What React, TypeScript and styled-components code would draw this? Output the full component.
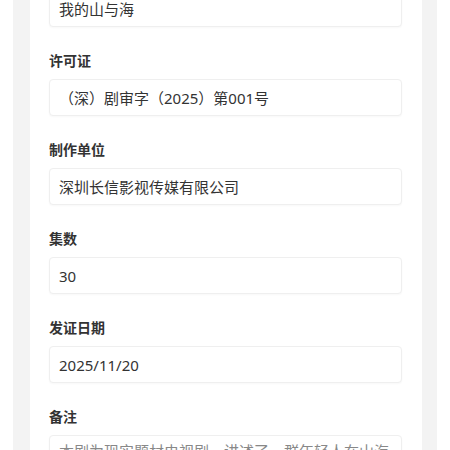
import styled, { createGlobalStyle } from "styled-components";

const GlobalStyle = createGlobalStyle`
  html, body {
    margin: 0;
    padding: 0;
    background: #ffffff;
  }
  body {
    font-family: "Noto Sans", "Noto Sans CJK SC", sans-serif;
  }
`;

const Viewport = styled.div`
  height: 450px;
  overflow: hidden;
  padding: 0 13px;
`;

const Frame = styled.div`
  background: #f3f3f3;
  padding: 0 15px 0 17px;
  min-height: 100%;
`;

const Card = styled.div`
  background: #ffffff;
  padding: 0 20px 0 19px;
`;

// page is scrolled, the first field sits partly above the window
const Form = styled.div`
  display: flex;
  flex-direction: column;
  gap: 24px;
  margin-top: -38px;
`;

const Field = styled.div`
  display: flex;
  flex-direction: column;
  gap: 8px;
`;

const Label = styled.div`
  font-size: 14px;
  line-height: 20px;
  font-weight: 700;
  color: #333333;
`;

const Input = styled.div<{ $muted?: boolean; $tall?: boolean }>`
  box-sizing: border-box;
  height: ${(p) => (p.$tall ? "80px" : "37px")};
  border: 1px solid #efefef;
  border-radius: 4px;
  background: #ffffff;
  box-shadow: 0 1px 2px rgba(0, 0, 0, 0.03);
  padding: ${(p) => (p.$tall ? "4px 9px" : "0 9px")};
  display: flex;
  align-items: ${(p) => (p.$tall ? "flex-start" : "center")};
  font-size: 15px;
  line-height: 22px;
  color: ${(p) => (p.$muted ? "#888888" : "#333333")};
`;

const fields = [
  { label: "剧名", value: "我的山与海" },
  { label: "许可证", value: "（深）剧审字（2025）第001号" },
  { label: "制作单位", value: "深圳长信影视传媒有限公司" },
  { label: "集数", value: "30" },
  { label: "发证日期", value: "2025/11/20" },
];

export default function App() {
  return (
    <>
      <GlobalStyle />
      <Viewport>
        <Frame>
          <Card>
            <Form>
              {fields.map((f) => (
                <Field key={f.label}>
                  <Label>{f.label}</Label>
                  <Input>{f.value}</Input>
                </Field>
              ))}
              <Field>
                <Label>备注</Label>
                <Input $tall $muted>
                  本剧为现实题材电视剧，讲述了一群年轻人在山海之间追寻梦想的故事
                </Input>
              </Field>
            </Form>
          </Card>
        </Frame>
      </Viewport>
    </>
  );
}
